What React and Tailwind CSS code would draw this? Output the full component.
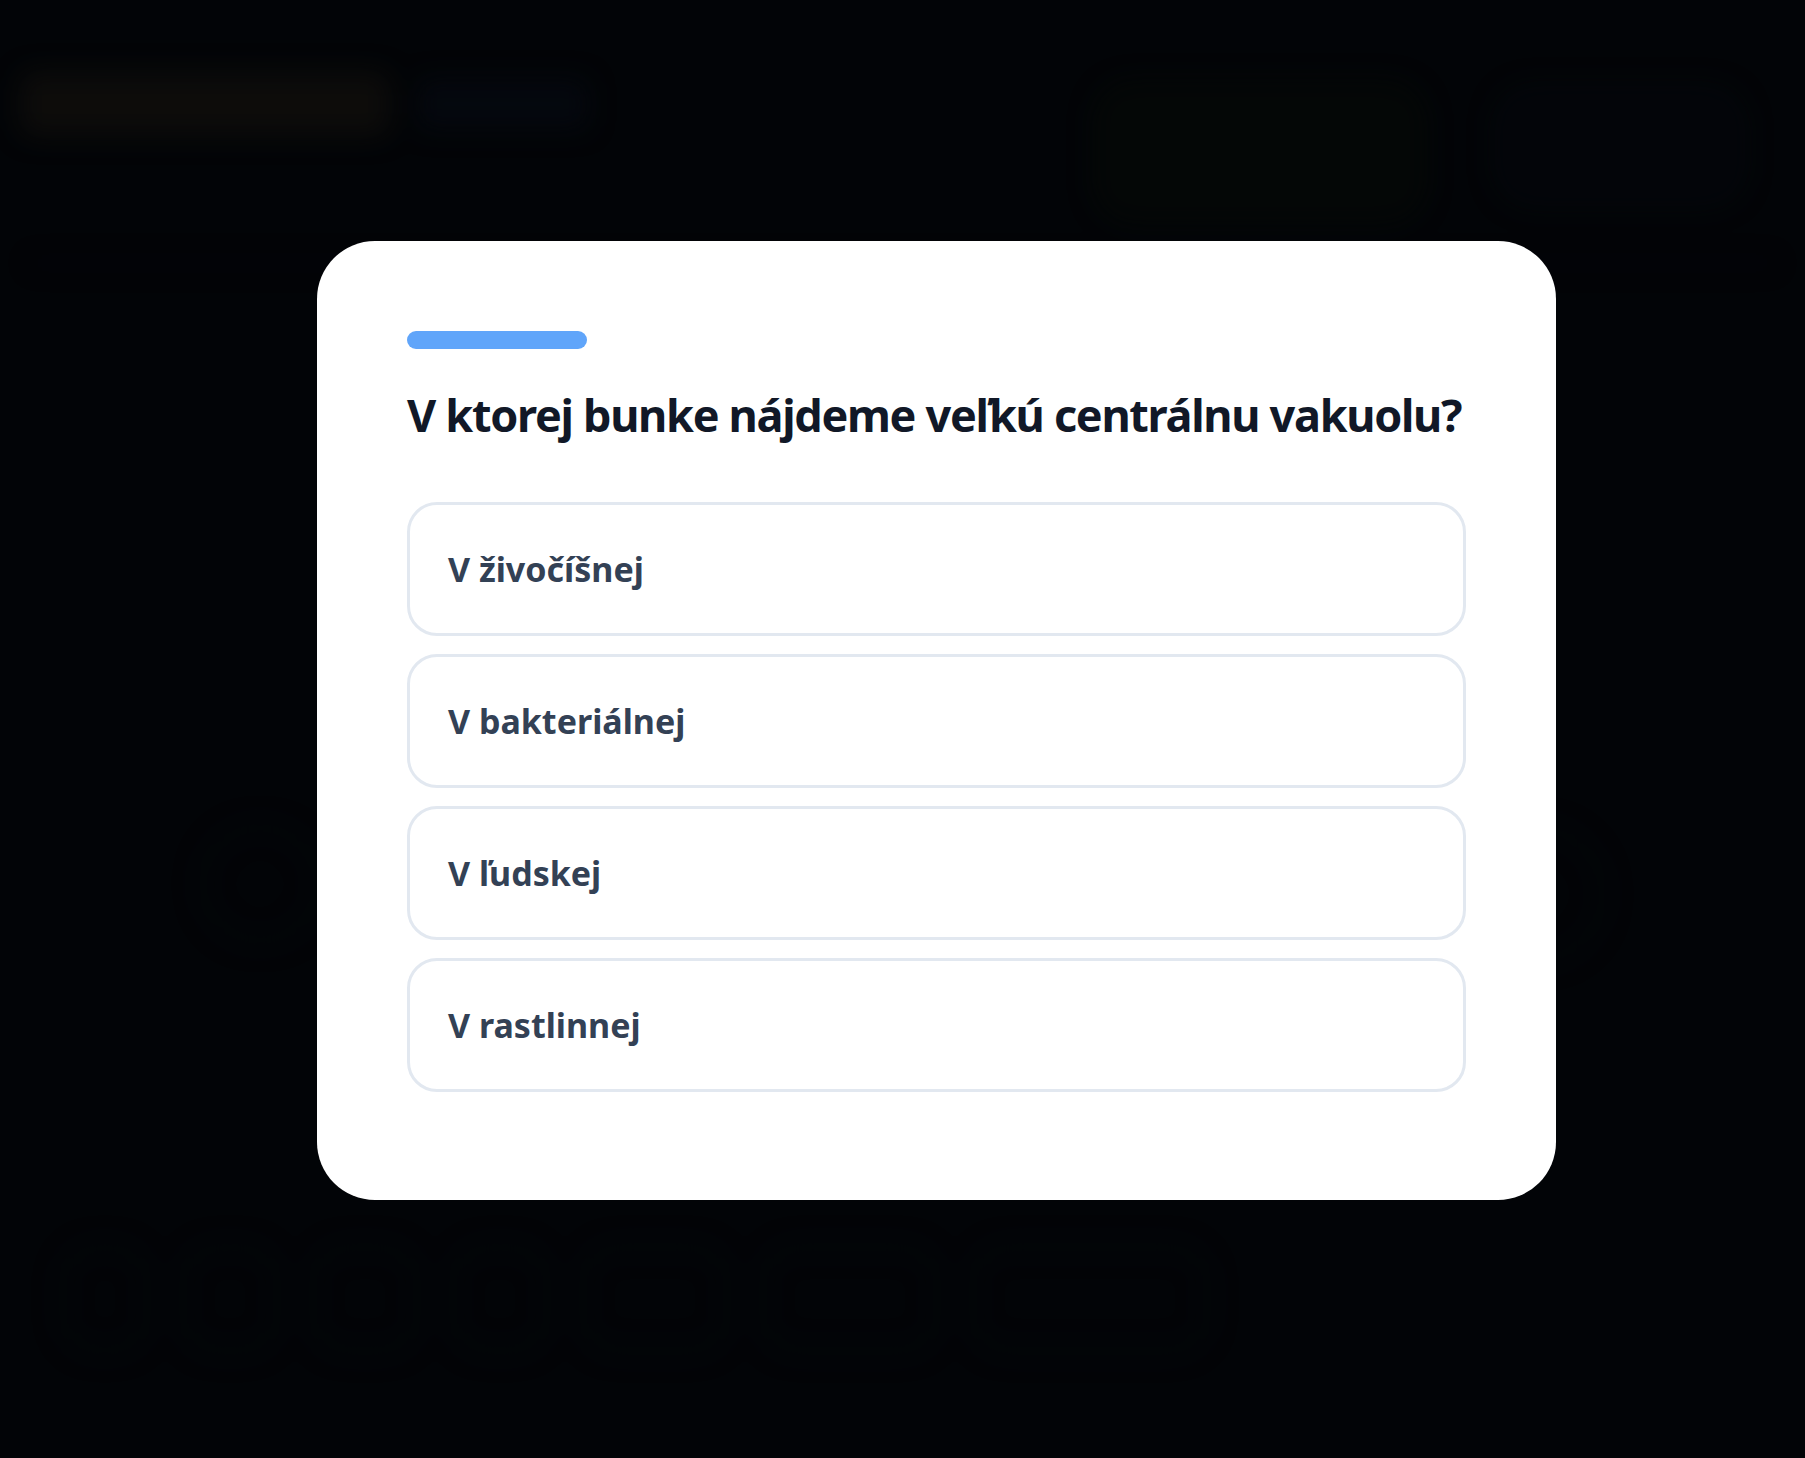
import React, { useState } from 'react';

const QUESTION = 'V ktorej bunke nájdeme veľkú centrálnu vakuolu?';

const OPTIONS = [
  { id: 'a', label: 'V živočíšnej' },
  { id: 'b', label: 'V bakteriálnej' },
  { id: 'c', label: 'V ľudskej' },
  { id: 'd', label: 'V rastlinnej' },
];

// The dimmed page lying under the dialog
const BackdropPage = () => (
  <div className="pointer-events-none blur-[12px] select-none">
    <div className="flex items-start justify-between px-[20px] pt-[72px]">
      <div className="flex items-center gap-[28px]">
        <div className="h-[64px] w-[370px] rounded-2xl bg-[#14110d]" />
        <div className="h-[50px] w-[170px] rounded-xl bg-[#060a13]" />
      </div>
      <div className="flex items-start gap-[70px] pr-[40px]">
        <div className="mt-[10px] h-[140px] w-[330px] rounded-[40px] border-4 border-[#090e09] bg-[#050905]" />
        <div className="mt-[14px] h-[120px] w-[250px] rounded-[40px] border-4 border-[#080b12] bg-[#04060b]" />
      </div>
    </div>
    <div className="mx-[30px] mt-[40px] h-[2px] bg-[#06070a]" />
    <div className="flex justify-between px-[200px] pt-[560px]">
      <div className="h-[120px] w-[120px] rounded-full border-[6px] border-[#07080b]" />
      <div className="h-[140px] w-[200px] rounded-full border-[6px] border-[#07080b]" />
    </div>
    <div className="flex gap-[30px] px-[60px] pt-[280px]">
      {[90, 100, 110, 100, 150, 180, 240].map((w, i) => (
        <div key={i} className="h-[110px] rounded-[40px] border-[6px] border-[#07080b]" style={{ width: w }} />
      ))}
    </div>
  </div>
);

const OptionButton = ({ label, selected, onClick }) => (
  <button
    type="button"
    onClick={onClick}
    className={`flex h-[134px] w-full items-center rounded-[30px] border-[3px] bg-white pl-[38px] text-left ${
      selected ? 'border-[#60a5fa]' : 'border-[#e2e8f0]'
    }`}
  >
    <span className="text-[34px] font-bold leading-none text-[#334155]">{label}</span>
  </button>
);

export default function App() {
  const [selected, setSelected] = useState(null);

  return (
    <div
      className="relative h-[1458px] w-full overflow-hidden bg-[#030407]"
      style={{ fontFamily: '"Noto Sans", Lato, sans-serif' }}
    >
      <BackdropPage />

      {/* quiz dialog */}
      <div className="absolute inset-0 flex items-start bg-[#030407]/40 pl-[317px] pt-[241px]">
        <div className="w-[1239px] rounded-[58px] bg-white px-[90px] pb-[108px] pt-[90px]">
          <div className="h-[18px] w-[180px] rounded-full bg-[#60a5fa]" />

          <h2 className="mt-[38px] whitespace-nowrap text-[45px] font-bold leading-[56px] tracking-[-1.3px] text-[#111827]">
            {QUESTION}
          </h2>

          <div className="mt-[59px] flex flex-col gap-[18px]">
            {OPTIONS.map((opt) => (
              <OptionButton
                key={opt.id}
                label={opt.label}
                selected={selected === opt.id}
                onClick={() => setSelected(opt.id)}
              />
            ))}
          </div>
        </div>
      </div>
    </div>
  );
}
